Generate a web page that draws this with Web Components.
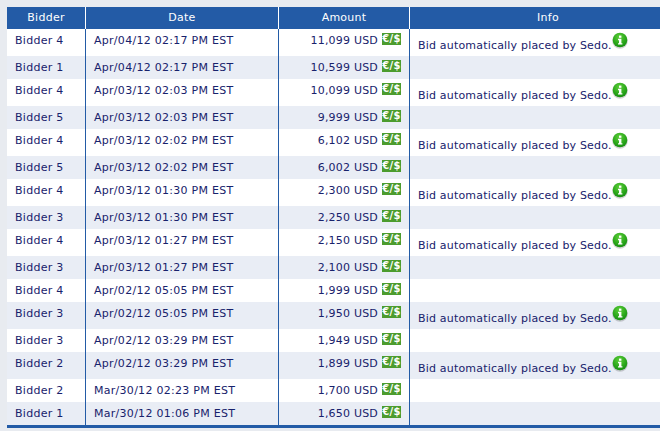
<!DOCTYPE html>
<html>
<head>
<meta charset="utf-8">
<title>Bids</title>
<style>
    html, body { margin: 0; padding: 0; background: #e8ebf0; }
    body { padding: 7px 0 0 7px; height: 424px; overflow: hidden; font-family: "DejaVu Sans", sans-serif; font-size: 11px; }
</style>
</head>
<body>
<bid-table>
    <bid-row bidder="Bidder 4" date="Apr/04/12 02:17 PM EST" amount="11,099" info></bid-row>
    <bid-row bidder="Bidder 1" date="Apr/04/12 02:17 PM EST" amount="10,599" odd></bid-row>
    <bid-row bidder="Bidder 4" date="Apr/03/12 02:03 PM EST" amount="10,099" info></bid-row>
    <bid-row bidder="Bidder 5" date="Apr/03/12 02:03 PM EST" amount="9,999" odd></bid-row>
    <bid-row bidder="Bidder 4" date="Apr/03/12 02:02 PM EST" amount="6,102" info></bid-row>
    <bid-row bidder="Bidder 5" date="Apr/03/12 02:02 PM EST" amount="6,002" odd></bid-row>
    <bid-row bidder="Bidder 4" date="Apr/03/12 01:30 PM EST" amount="2,300" info></bid-row>
    <bid-row bidder="Bidder 3" date="Apr/03/12 01:30 PM EST" amount="2,250" odd></bid-row>
    <bid-row bidder="Bidder 4" date="Apr/03/12 01:27 PM EST" amount="2,150" info></bid-row>
    <bid-row bidder="Bidder 3" date="Apr/03/12 01:27 PM EST" amount="2,100" odd></bid-row>
    <bid-row bidder="Bidder 4" date="Apr/02/12 05:05 PM EST" amount="1,999"></bid-row>
    <bid-row bidder="Bidder 3" date="Apr/02/12 05:05 PM EST" amount="1,950" odd info></bid-row>
    <bid-row bidder="Bidder 3" date="Apr/02/12 03:29 PM EST" amount="1,949"></bid-row>
    <bid-row bidder="Bidder 2" date="Apr/02/12 03:29 PM EST" amount="1,899" odd info></bid-row>
    <bid-row bidder="Bidder 2" date="Mar/30/12 02:23 PM EST" amount="1,700"></bid-row>
    <bid-row bidder="Bidder 1" date="Mar/30/12 01:06 PM EST" amount="1,650" odd></bid-row>
</bid-table>

<script>
const tableTemplate = document.createElement("template")
tableTemplate.innerHTML = `
    <style>
        :host {
            display: block;
            width: 679px;
            border-bottom: 3px solid #235ba6;
        }
        .head {
            display: grid;
            grid-template-columns: 79px 193px 131px 276px;
            height: 22px;
            background-color: #235ba6;
            color: #ffffff;
            letter-spacing: 0.25px;
        }
        .head span {
            text-align: center;
            line-height: 22px;
            border-right: 1px solid #ffffff;
        }
        .head span:last-child { border-right: none; }
    </style>
    <div class="head">
        <span>Bidder</span>
        <span>Date</span>
        <span>Amount</span>
        <span>Info</span>
    </div>
    <slot></slot>
`

class BidTable extends HTMLElement {
    constructor() {
        super()
        this.attachShadow({ mode: "open" })
        this.shadowRoot.appendChild(tableTemplate.content.cloneNode(true))
    }
}

const rowTemplate = document.createElement("template")
rowTemplate.innerHTML = `
    <style>
        :host {
            display: grid;
            grid-template-columns: 79px 193px 131px 276px;
            height: 23px;
            background-color: #ffffff;
            color: #18226c;
            line-height: 13px;
        }
        :host([info]) { height: 27px; }
        :host([odd]) { background-color: #e9edf5; }
        .cell {
            box-sizing: border-box;
            padding-top: 5px;
            border-right: 1px solid #235ba6;
            white-space: nowrap;
        }
        .bidder { padding-left: 8px; letter-spacing: 0.28px; }
        .date { padding-left: 8px; letter-spacing: 0.28px; }
        .amount {
            display: flex;
            justify-content: flex-end;
            align-items: flex-start;
            gap: 4px;
            padding-right: 8px;
        }
        .usd { letter-spacing: 0.2px; }
        .info {
            border-right: none;
            padding-left: 8px;
            padding-top: 10px;
            display: flex;
            align-items: flex-start;
            letter-spacing: 0.19px;
        }
        :host(:not([info])) .info { visibility: hidden; }
        .money {
            width: 19px;
            height: 12px;
            margin-top: -1px;
            background-color: #4c9c2e;
            color: #ffffff;
            font: bold 11px/12px "DejaVu Sans Condensed", "DejaVu Sans", sans-serif;
            text-align: center;
            letter-spacing: 0.4px;
            overflow: hidden;
        }
        svg { margin: -7px 0 0 0; flex: none; }
    </style>
    <div class="cell bidder"></div>
    <div class="cell date"></div>
    <div class="cell amount"><span class="usd"></span><span class="money">€/$</span></div>
    <div class="cell info">
        <span>Bid automatically placed by Sedo.</span>
        <svg width="16" height="17" viewBox="0 0 16 17">
            <defs>
                <radialGradient id="g" cx="0.45" cy="0.3" r="0.75">
                    <stop offset="0" stop-color="#5ed03a"/>
                    <stop offset="0.6" stop-color="#2ca81c"/>
                    <stop offset="1" stop-color="#138a10"/>
                </radialGradient>
            </defs>
            <ellipse cx="8" cy="9" rx="7.8" ry="7.8" fill="#000" opacity="0.18"/>
            <circle cx="8" cy="8" r="7.3" fill="url(#g)"/>
            <rect x="7" y="3.6" width="2.4" height="2.2" fill="#fff"/>
            <path d="M6 6.8h3.4v4.4h1v1.4H6v-1.4h1V8.2H6z" fill="#fff"/>
        </svg>
    </div>
`

class BidRow extends HTMLElement {
    constructor() {
        super()
        this.attachShadow({ mode: "open" })
        this.shadowRoot.appendChild(rowTemplate.content.cloneNode(true))
    }

    connectedCallback() {
        this.shadowRoot.querySelector(".bidder").textContent = this.getAttribute("bidder")
        this.shadowRoot.querySelector(".date").textContent = this.getAttribute("date")
        this.shadowRoot.querySelector(".usd").textContent = this.getAttribute("amount") + " USD"
    }
}

customElements.define("bid-table", BidTable)
customElements.define("bid-row", BidRow)
</script>
</body>
</html>
